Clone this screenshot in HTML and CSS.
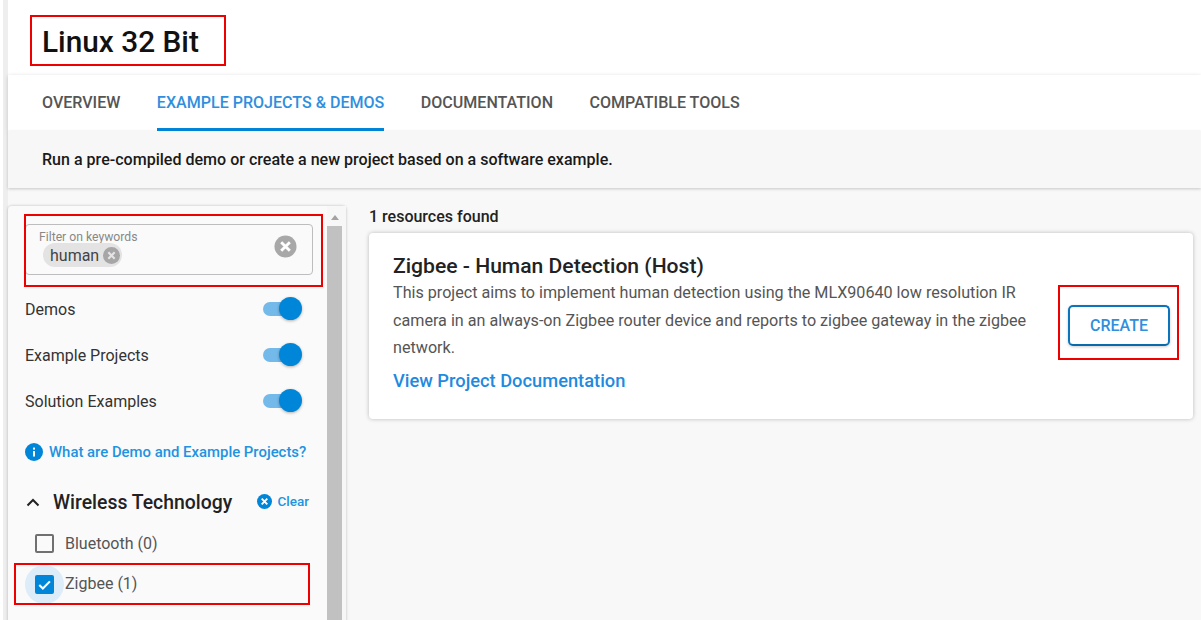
FILE: index.html
```html
<!DOCTYPE html>
<html lang="en">

<head>
    <meta charset="UTF-8">
    <title>Linux 32 Bit</title>
    <link rel="stylesheet" href="styles.css">
</head>

<body>
    <div class="page">
        <header class="title-bar">
            <h1>Linux 32 Bit</h1>
            <span class="mark mark-title"></span>
        </header>

        <nav class="tabs">
            <a href="#">OVERVIEW</a>
            <a href="#" class="active">EXAMPLE PROJECTS &amp; DEMOS</a>
            <a href="#">DOCUMENTATION</a>
            <a href="#">COMPATIBLE TOOLS</a>
        </nav>

        <div class="intro">Run a pre-compiled demo or create a new project based on a software example.</div>

        <div class="content">
            <aside class="sidebar">
                <div class="filters">
                    <div class="keyword-box">
                        <span class="keyword-label">Filter on keywords</span>
                        <span class="chip">human
                            <svg class="chip-x" viewBox="0 0 16 16">
                                <circle cx="8" cy="8" r="8" fill="#a6a6a6" />
                                <path d="M5 5l6 6M11 5l-6 6" stroke="#e4e4e4" stroke-width="2" />
                            </svg>
                        </span>
                        <svg class="clear-all" viewBox="0 0 24 24">
                            <circle cx="12" cy="12" r="11.5" fill="#a8a8a8" />
                            <path d="M7.5 7.5l9 9M16.5 7.5l-9 9" stroke="#fff" stroke-width="3" />
                        </svg>
                    </div>
                    <span class="mark mark-filter"></span>

                    <div class="toggle-row">Demos<span class="switch"></span></div>
                    <div class="toggle-row">Example Projects<span class="switch"></span></div>
                    <div class="toggle-row">Solution Examples<span class="switch"></span></div>

                    <a href="#" class="help-link">
                        <svg viewBox="0 0 18 18" width="18" height="18">
                            <circle cx="9" cy="9" r="9" fill="#0086d9" />
                            <rect x="8" y="8" width="2" height="5.5" fill="#fff" />
                            <rect x="8" y="4.6" width="2" height="2" fill="#fff" />
                        </svg>
                        What are Demo and Example Projects?
                    </a>

                    <div class="group-head">
                        <svg class="chevron" viewBox="0 0 14 9">
                            <path d="M1.5 7.5L7 2l5.5 5.5" fill="none" stroke="#222" stroke-width="2" />
                        </svg>
                        <h3>Wireless Technology</h3>
                        <a href="#" class="clear-link">
                            <svg viewBox="0 0 16 16" width="15" height="15">
                                <circle cx="8" cy="8" r="8" fill="#0086d9" />
                                <path d="M5 5l6 6M11 5l-6 6" stroke="#fff" stroke-width="2" />
                            </svg>
                            Clear
                        </a>
                    </div>

                    <div class="check-row">
                        <span class="box"></span>Bluetooth (0)
                    </div>
                    <div class="check-row">
                        <span class="halo"></span>
                        <span class="box checked">
                            <svg viewBox="0 0 20 20">
                                <path d="M4.5 10.5l3.8 3.8 7.4-7.6" fill="none" stroke="#fff" stroke-width="2.2" />
                            </svg>
                        </span>Zigbee (1)
                    </div>
                    <span class="mark mark-zigbee"></span>
                </div>
                <div class="scrollbar">
                    <span class="arrow"></span>
                    <span class="thumb"></span>
                </div>
            </aside>

            <main class="results">
                <p class="count">1 resources found</p>
                <article class="card">
                    <div class="card-text">
                        <h2>Zigbee - Human Detection (Host)</h2>
                        <p>This project aims to implement human detection using the MLX90640 low resolution IR camera in an always-on Zigbee router device and reports to zigbee gateway in the zigbee network.</p>
                        <a href="#">View Project Documentation</a>
                    </div>
                    <button class="create">CREATE</button>
                    <span class="mark mark-create"></span>
                </article>
            </main>
        </div>
    </div>
</body>

</html>
```

FILE: styles.css
```css
/* General styling */
* {
    margin: 0;
    padding: 0;
    box-sizing: border-box;
}

html,
body {
    height: 620px;
    overflow: hidden;
    background-color: #fff;
}

body {
    padding-left: 3px;
    font-family: Roboto, "Liberation Sans", sans-serif;
    color: #222;
}

a {
    text-decoration: none;
}

.page {
    height: 620px;
    padding-left: 5px;
    background-color: #eee;
    overflow: hidden;
}

/* Red marks drawn over the screenshot */
.mark {
    position: absolute;
    border: 2px solid #ee0000;
    pointer-events: none;
}

.mark-title {
    left: 30px;
    top: 15px;
    width: 196px;
    height: 51px;
}

.mark-filter {
    left: 24px;
    top: 214px;
    width: 299px;
    height: 73px;
}

.mark-zigbee {
    left: 14px;
    top: 563px;
    width: 296px;
    height: 42px;
}

.mark-create {
    left: 1058px;
    top: 285px;
    width: 121px;
    height: 75px;
}

/* Header */
.title-bar {
    height: 75px;
    padding: 24px 0 0 34px;
    background-color: #fff;
}

h1 {
    font-size: 29.8px;
    font-weight: 500;
    line-height: 35px;
    color: #111;
}

.tabs {
    position: relative;
    display: flex;
    gap: 36.5px;
    height: 56px;
    padding-left: 34px;
    background-color: #fff;
    box-shadow: 0 1px 4px rgba(0, 0, 0, 0.18);
}

.tabs a {
    padding-top: 18px;
    font-size: 16.06px;
    font-weight: 500;
    line-height: 19px;
    color: #555;
}

.tabs a.active {
    color: #2f8fde;
    border-bottom: 3px solid #0086d9;
}

.intro {
    position: relative;
    height: 57px;
    padding: 19px 0 0 34px;
    font-size: 16.06px;
    font-weight: 500;
    line-height: 19px;
    color: #1a1a1a;
    background-color: #f7f7f7;
    box-shadow: 0 1px 3px rgba(0, 0, 0, 0.2);
}

/* Content */
.content {
    display: flex;
    height: 432px;
    padding-top: 18px;
    background-color: #f8f8f8;
}

.sidebar {
    display: flex;
    width: 338px;
    height: 420px;
    background-color: #fafafa;
    border-radius: 4px 4px 0 0;
    box-shadow: 0 0 3px rgba(0, 0, 0, 0.25);
}

.filters {
    width: 319px;
    padding: 18px 18px 0 17px;
}

.keyword-box {
    position: relative;
    height: 51px;
    margin: 0 -4px 11px 0;
    padding: 5px 0 0 13px;
    border: 1px solid #bdbdbd;
    border-radius: 4px;
}

.keyword-label {
    display: block;
    font-size: 12.2px;
    line-height: 14px;
    color: #888;
}

.chip {
    display: inline-flex;
    align-items: center;
    gap: 4px;
    height: 24px;
    margin: -1px 0 0 4px;
    padding: 0 2px 0 7px;
    font-size: 16px;
    color: #444;
    background-color: #e3e3e3;
    border-radius: 12px;
}

.chip-x {
    width: 17px;
    height: 17px;
}

.clear-all {
    position: absolute;
    right: 15px;
    top: 10px;
    width: 23px;
    height: 23px;
}

.toggle-row {
    display: flex;
    align-items: center;
    justify-content: space-between;
    height: 46px;
    font-size: 16px;
    color: #333;
}

.switch {
    position: relative;
    width: 34px;
    height: 14px;
    margin-right: 12px;
    background-color: #73b9ea;
    border-radius: 7px;
}

.switch::after {
    content: "";
    position: absolute;
    right: -5px;
    top: -5px;
    width: 23px;
    height: 23px;
    background-color: #0086d9;
    border-radius: 50%;
    box-shadow: 0 1px 3px rgba(0, 0, 0, 0.3);
}

.help-link {
    display: flex;
    align-items: center;
    gap: 6px;
    margin-top: 19px;
    font-size: 14.9px;
    font-weight: 500;
    color: #2293e0;
    white-space: nowrap;
}

.group-head {
    display: flex;
    align-items: center;
    height: 28px;
    margin-top: 27px;
}

.chevron {
    width: 14px;
    height: 9px;
    margin: 0 13px 0 1px;
}

h3 {
    font-size: 19.4px;
    font-weight: 500;
    color: #222;
    white-space: nowrap;
}

.clear-link {
    display: flex;
    align-items: center;
    gap: 5px;
    margin: -2px 0 0 auto;
    font-size: 13.5px;
    font-weight: 500;
    color: #2293e0;
}

.check-row {
    position: relative;
    isolation: isolate;
    display: flex;
    align-items: center;
    gap: 11px;
    height: 40px;
    padding-left: 10px;
    font-size: 16px;
    color: #555;
}

.group-head + .check-row {
    margin-top: 7px;
}

.box {
    position: relative;
    width: 19px;
    height: 19px;
    border: 2px solid #707070;
    border-radius: 2px;
}

.box.checked {
    margin-top: 2px;
    background-color: #0086d9;
    border: 0;
}

.box.checked svg {
    display: block;
}

.halo {
    position: absolute;
    z-index: -1;
    left: 0;
    top: 2px;
    width: 39px;
    height: 39px;
    background-color: #dcecf8;
    border-radius: 50%;
}

.scrollbar {
    display: flex;
    flex-direction: column;
    width: 19px;
    background-color: #f7f7f7;
}

.arrow {
    width: 0;
    height: 0;
    margin: 9px 0 6px 4px;
    border: 4px solid transparent;
    border-top: 0;
    border-bottom: 5px solid #a3a3a3;
}

.thumb {
    flex: 1;
    width: 15px;
    background-color: #c1c1c1;
}

.results {
    width: 824px;
    margin-left: 23px;
}

.count {
    margin-top: 1px;
    font-size: 16px;
    font-weight: 500;
    line-height: 19px;
    color: #222;
}

.card {
    display: flex;
    align-items: center;
    justify-content: space-between;
    height: 186px;
    margin-top: 7px;
    padding: 0 23px 0 24px;
    background-color: #fff;
    border-radius: 4px;
    box-shadow: 0 0 4px rgba(0, 0, 0, 0.25);
}

.card-text {
    width: 650px;
    padding-bottom: 8px;
}

h2 {
    position: relative;
    top: 1px;
    margin-bottom: 2px;
    font-size: 21.1px;
    font-weight: 500;
    line-height: 24px;
    color: #222;
}

.card-text p {
    font-size: 16.15px;
    line-height: 27.5px;
    color: #555;
}

.card-text a {
    display: block;
    margin-top: 8px;
    font-size: 18.3px;
    font-weight: 500;
    line-height: 21px;
    color: #1f8ae0;
}

.create {
    width: 102px;
    height: 41px;
    margin-top: -2px;
    font-family: inherit;
    font-size: 16px;
    font-weight: 500;
    color: #2f8fde;
    background-color: #fff;
    border: 2px solid #0a75bd;
    border-bottom-color: #0a69ab;
    border-radius: 5px;
    box-shadow: 0 1px 3px rgba(0, 0, 0, 0.2);
}
```
